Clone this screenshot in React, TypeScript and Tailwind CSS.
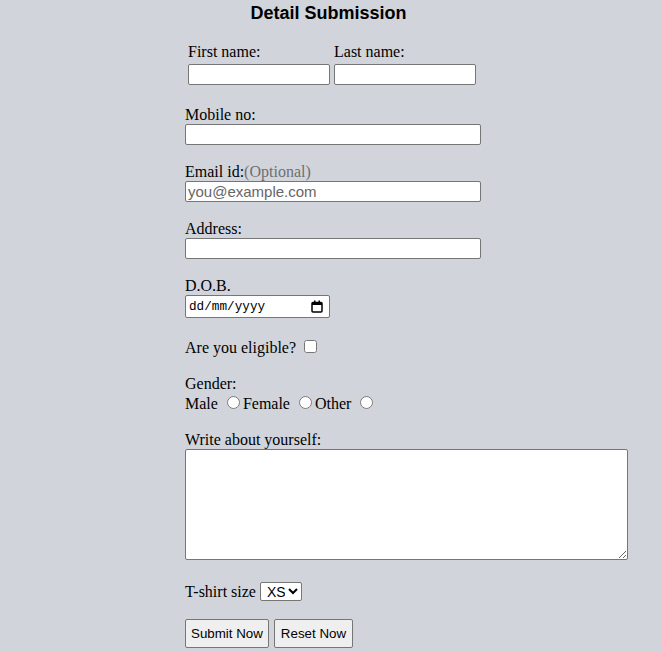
import React, { useState } from 'react';

const sans = "font-['Liberation_Sans',Arial,sans-serif]";

const textInput =
  "block h-[21px] rounded-[2px] border border-[#767676] bg-white px-[2px] py-[1px] text-[15px] leading-[normal] font-['Liberation_Sans',Arial,sans-serif] placeholder:text-[#666666] outline-none";

const CalendarIcon = () => (
  <svg width="12" height="13" viewBox="0 0 12 13" className="block">
    <rect x="1" y="2.5" width="10" height="9.5" rx="1" fill="none" stroke="#000" strokeWidth="1.5" />
    <rect x="1" y="2.5" width="10" height="2.5" fill="#000" />
    <rect x="3" y="0.5" width="1.5" height="2.5" fill="#000" />
    <rect x="7.5" y="0.5" width="1.5" height="2.5" fill="#000" />
  </svg>
);

const App: React.FC = () => {
  const [size, setSize] = useState('XS');

  return (
    <div className="min-h-screen bg-[#d1d5db] font-['Liberation_Serif','Times_New_Roman',serif] text-[16px] leading-[normal] text-black">
      <h3 className={`pt-[3px] pr-[5px] text-center text-[18px] font-bold ${sans}`}>
        Detail Submission
      </h3>

      <form className="pl-[185px]" onSubmit={(e) => e.preventDefault()}>
        <div className="mt-[19px] ml-[3px] grid grid-cols-[142px_142px] gap-x-[4px] gap-y-[3px]">
          <label>First name:</label>
          <label>Last name:</label>
          <input type="text" className={`${textInput} w-[142px]`} />
          <input type="text" className={`${textInput} w-[142px]`} />
        </div>

        <div className="mt-[20px]">
          <label className="block leading-[19px]">Mobile no:</label>
          <input type="tel" className={`${textInput} w-[296px]`} />
        </div>

        <div className="mt-[17px]">
          <label className="block leading-[19px]">
            Email id:<span className="text-[#6e6e73]">(Optional)</span>
          </label>
          <input type="email" placeholder="you@example.com" className={`${textInput} w-[296px]`} />
        </div>

        <div className="mt-[17px]">
          <label className="block leading-[19px]">Address:</label>
          <input type="text" className={`${textInput} w-[296px]`} />
        </div>

        <div className="mt-[17px]">
          <label className="block leading-[19px]">D.O.B.</label>
          <div className="flex h-[23px] w-[145px] items-center justify-between rounded-[2px] border border-[#767676] bg-white pl-[3px] pr-[6px]">
            <input
              type="text"
              placeholder="dd/mm/yyyy"
              className="w-[100px] bg-transparent font-['Liberation_Mono','DejaVu_Sans_Mono',monospace] text-[12.7px] outline-none placeholder:text-black"
            />
            <CalendarIcon />
          </div>
        </div>

        <div className="mt-[19px] leading-[19px]">
          Are you eligible?{' '}
          <input type="checkbox" className="mt-[3px] mr-[3px] mb-[3px] ml-[4px] h-[13px] w-[13px] align-baseline" />
        </div>

        <div className="mt-[17px]">
          <div className="leading-[19px]">Gender:</div>
          <div className="leading-[19px]">
            Male <input type="radio" name="gender" className="mt-[3px] mr-[3px] ml-[5px] h-[13px] w-[13px] align-baseline" />
            Female <input type="radio" name="gender" className="mt-[3px] mr-[3px] ml-[5px] h-[13px] w-[13px] align-baseline" />
            Other <input type="radio" name="gender" className="mt-[3px] mr-[3px] ml-[5px] h-[13px] w-[13px] align-baseline" />
          </div>
        </div>

        <div className="mt-[17px]">
          <label className="block leading-[19px]">Write about yourself:</label>
          <textarea className="block h-[111px] w-[443px] rounded-[2px] border border-[#767676] bg-white p-[2px] text-[13.333px] font-['Liberation_Mono',monospace] outline-none" />
        </div>

        <div className="mt-[22px] leading-[19px]">
          T-shirt size{' '}
          <select
            value={size}
            onChange={(e) => setSize(e.target.value)}
            className={`h-[19px] w-[42px] rounded-[2px] border border-[#767676] bg-white pl-[2px] text-[14px] align-baseline ${sans}`}
          >
            <option>XS</option>
            <option>S</option>
            <option>M</option>
            <option>L</option>
            <option>XL</option>
          </select>
        </div>

        <div className="mt-[18px] flex gap-[5px]">
          <button type="submit" className={`h-[29px] rounded-[2px] border border-[#767676] bg-[#efefef] px-[5px] text-[13.333px] ${sans}`}>
            Submit Now
          </button>
          <button type="reset" className={`h-[29px] rounded-[2px] border border-[#767676] bg-[#efefef] px-[6px] text-[13.333px] ${sans}`}>
            Reset Now
          </button>
        </div>
      </form>
    </div>
  );
};

export default App;
